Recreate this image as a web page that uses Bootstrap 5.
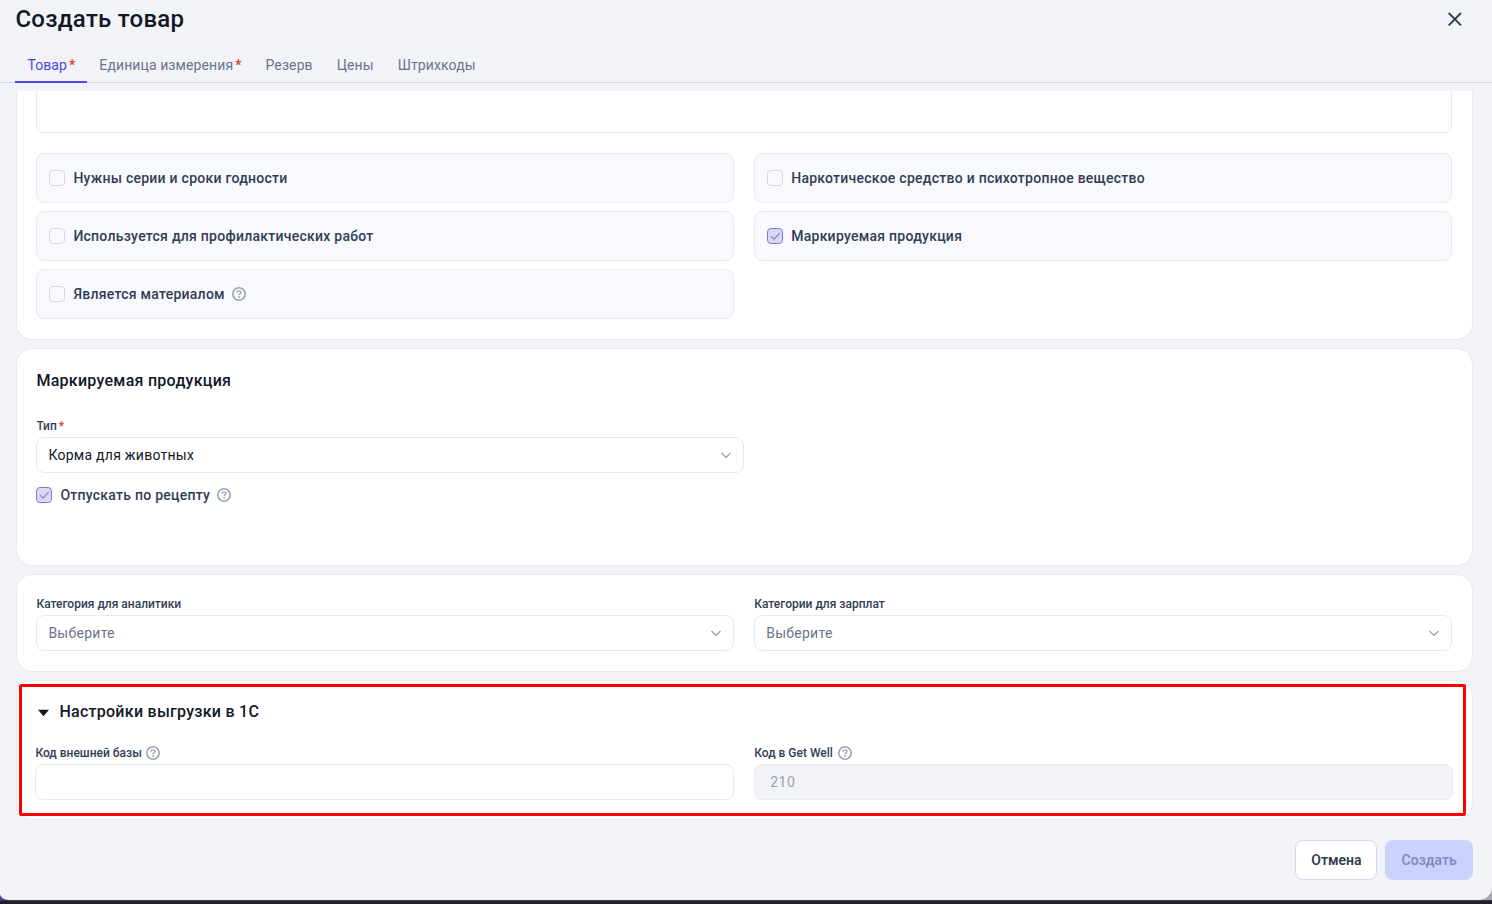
<!DOCTYPE html>
<html lang="ru">
<head>
<meta charset="utf-8">
<title>Создать товар</title>
<link href="https://cdn.jsdelivr.net/npm/bootstrap@5.3.0/dist/css/bootstrap.min.css" rel="stylesheet">
<script src="https://cdn.jsdelivr.net/npm/bootstrap@5.3.0/dist/js/bootstrap.bundle.min.js"></script>
<style>
:root{--ink:#111827;--label:#323d54;--muted:#6b7489;--line:#e8e9f3;--accent:#4f46e5;--page:#f2f3f7}
html,body{height:904px;overflow:hidden}
body{font-family:Roboto,"Liberation Sans",sans-serif;font-size:14px;line-height:20px;letter-spacing:.26px;color:var(--ink);background:linear-gradient(90deg,#4a4590 0 50%,#a9a9b2 50%)}
.dialog{height:900px;background:var(--page);border-radius:0 0 14px 9px / 0 0 13px 6px}
.taskbar{height:4px;background:#231d2b;border-top:1px solid #3d3942}
.dialog-head{height:38px;padding:0 27px 0 15.4px}
.dialog-title{font-size:24px;line-height:38px;font-weight:500;letter-spacing:.27px}
.dialog-close{width:20px;height:20px;color:#323d54}
.tab-row{height:45px;padding:0 15.4px;border-bottom:1px solid #d5d6ec}
.tab-row .nav-link{height:45px;padding:17px 12px 0;color:var(--muted);line-height:20px;letter-spacing:.1px;border-bottom:2px solid transparent;white-space:nowrap}
.tab-row .nav-link.active{color:var(--accent);border-color:var(--accent)}
.req{color:#dc3a31;margin-left:2px;font-weight:500}
.scroller{height:729px;margin:8px 19px 0 15.8px}
.panel{background:#fff;border:1px solid #e9eaf0;border-radius:16px;padding:19px 20px 19px 19.6px;margin-bottom:8px}
.panel-top{border-top:0;border-radius:0 0 16px 16px;padding-top:0;height:249px}
.panel-mark{height:218px;padding-top:20px}
.panel-mark .panel-title{margin-bottom:23px}
.panel-category{height:98px}
.panel-export{height:140px;padding:19px 19px 19px 18.6px}
.panel-export .panel-title{margin-bottom:19px}
.notes{height:42px;border:1px solid var(--line);border-top:0;border-radius:0 0 8px 8px;margin-bottom:20px}
.cells{display:grid;grid-template-columns:1fr 1fr;gap:8px 20px}
.opt{height:50px;border:1px solid #e9eaf0;border-radius:8px;background:#f8f9fd;padding:0 12px}
.tick{width:16px;height:16px;flex:none;border:1px solid #d6d5ea;border-radius:4px;margin-right:8px}
.tick.on{background:#d8daec;border-color:#7b78ee}
.tick svg{display:block;width:14px;height:14px}
.strong-label{font-weight:500;color:var(--label)}
.help{width:14px;height:14px;flex:none;margin-left:7px;color:#9ca3b5}
.field-label .help{margin-left:4.7px}
.panel-title{font-size:16px;line-height:24px;font-weight:500;letter-spacing:.27px}
.field-label{font-size:12px;line-height:20px;font-weight:500;color:var(--label);letter-spacing:0;margin-bottom:1px}
.field{height:36px;border:1px solid var(--line);border-radius:8px;padding:0 11px;background:#fff}
.field.empty{color:var(--muted)}
.field.off{background:#f2f3f7;color:#9aa1b3;padding-left:15px;letter-spacing:.5px}
.field-type{width:707.6px}
.chev{width:12px;height:12px;color:#9ca3b5}
.caret{width:11px;height:8px;margin:2px 10px 0 3px}
.frame{position:absolute;left:2px;top:3px;width:1447px;height:132px;border:3px solid #f00;border-radius:2px;pointer-events:none}
.dialog-foot{padding:20px 19px 0 0}
.act{height:40px;border-radius:8px;font-size:14px;font-weight:600;padding:0;line-height:20px;letter-spacing:0}
.act-cancel{width:82px;background:#fff;border:1px solid #d6d5ea;color:var(--label)}
.act-create{width:87.6px;background:#c9d3fe;border:0;color:#838bbd}
</style>
</head>
<body>
<svg class="d-none">
  <symbol id="help" viewBox="0 0 14 14"><circle cx="7" cy="7" r="6.2" fill="none" stroke="currentColor" stroke-width="1.6"/><path d="M5.1 5.7C5.1 4.5 5.9 3.9 7 3.9s1.9.6 1.9 1.6c0 1.3-1.7 1.3-1.8 2.6" fill="none" stroke="currentColor" stroke-width="1.4"/><circle cx="7.1" cy="10" r=".9" fill="currentColor"/></symbol>
  <symbol id="chev" viewBox="0 0 12 12"><path d="M1.5 4 6 8.3 10.5 4" fill="none" stroke="currentColor" stroke-width="1.3"/></symbol>
  <symbol id="check" viewBox="0 0 14 14"><path d="M3 7.2 6 10.2 11.6 4.2" fill="none" stroke="#7b78ee" stroke-width="1.1"/></symbol>
</svg>
<main class="dialog">
  <header class="dialog-head d-flex align-items-center justify-content-between">
    <h1 class="dialog-title m-0">Создать товар</h1>
    <svg class="dialog-close" viewBox="0 0 20 20"><path d="M3.7 4 16 16.3M16 4 3.7 16.3" fill="none" stroke="currentColor" stroke-width="1.9"/></svg>
  </header>
  <nav class="tab-row nav flex-nowrap">
    <a class="nav-link active">Товар<span class="req">*</span></a>
    <a class="nav-link">Единица измерения<span class="req">*</span></a>
    <a class="nav-link">Резерв</a>
    <a class="nav-link">Цены</a>
    <a class="nav-link">Штрихкоды</a>
  </nav>
  <div class="scroller">
    <section class="panel panel-top">
      <div class="notes"></div>
      <div class="cells">
        <div class="opt d-flex align-items-center"><span class="tick"></span><span class="strong-label">Нужны серии и сроки годности</span></div>
        <div class="opt d-flex align-items-center"><span class="tick"></span><span class="strong-label">Наркотическое средство и психотропное вещество</span></div>
        <div class="opt d-flex align-items-center"><span class="tick"></span><span class="strong-label">Используется для профилактических работ</span></div>
        <div class="opt d-flex align-items-center"><span class="tick on"><svg><use href="#check"/></svg></span><span class="strong-label">Маркируемая продукция</span></div>
        <div class="opt d-flex align-items-center"><span class="tick"></span><span class="strong-label">Является материалом</span><svg class="help"><use href="#help"/></svg></div>
      </div>
    </section>
    <section class="panel panel-mark">
      <h2 class="panel-title">Маркируемая продукция</h2>
      <div class="field-label">Тип<span class="req">*</span></div>
      <div class="field field-type d-flex align-items-center justify-content-between"><span>Корма для животных</span><svg class="chev"><use href="#chev"/></svg></div>
      <div class="d-flex align-items-center mt-2 pt-1"><span class="tick on"><svg><use href="#check"/></svg></span><span class="strong-label">Отпускать по рецепту</span><svg class="help"><use href="#help"/></svg></div>
    </section>
    <section class="panel panel-category">
      <div class="cells">
        <div>
          <div class="field-label">Категория для аналитики</div>
          <div class="field empty d-flex align-items-center justify-content-between"><span>Выберите</span><svg class="chev"><use href="#chev"/></svg></div>
        </div>
        <div>
          <div class="field-label">Категории для зарплат</div>
          <div class="field empty d-flex align-items-center justify-content-between"><span>Выберите</span><svg class="chev"><use href="#chev"/></svg></div>
        </div>
      </div>
    </section>
    <section class="panel panel-export position-relative">
      <h2 class="panel-title d-flex align-items-center"><svg class="caret" viewBox="0 0 11 8"><path d="M0 .8H11L5.5 7.3Z" fill="#111827"/></svg>Настройки выгрузки в 1С</h2>
      <div class="cells">
        <div>
          <div class="field-label d-flex align-items-center">Код внешней базы<svg class="help"><use href="#help"/></svg></div>
          <div class="field"></div>
        </div>
        <div>
          <div class="field-label d-flex align-items-center">Код в Get Well<svg class="help"><use href="#help"/></svg></div>
          <div class="field off d-flex align-items-center">210</div>
        </div>
      </div>
      <div class="frame"></div>
    </section>
  </div>
  <footer class="dialog-foot d-flex justify-content-end gap-2">
    <button class="btn act act-cancel">Отмена</button>
    <button class="btn act act-create">Создать</button>
  </footer>
</main>
<div class="taskbar"></div>
</body>
</html>
